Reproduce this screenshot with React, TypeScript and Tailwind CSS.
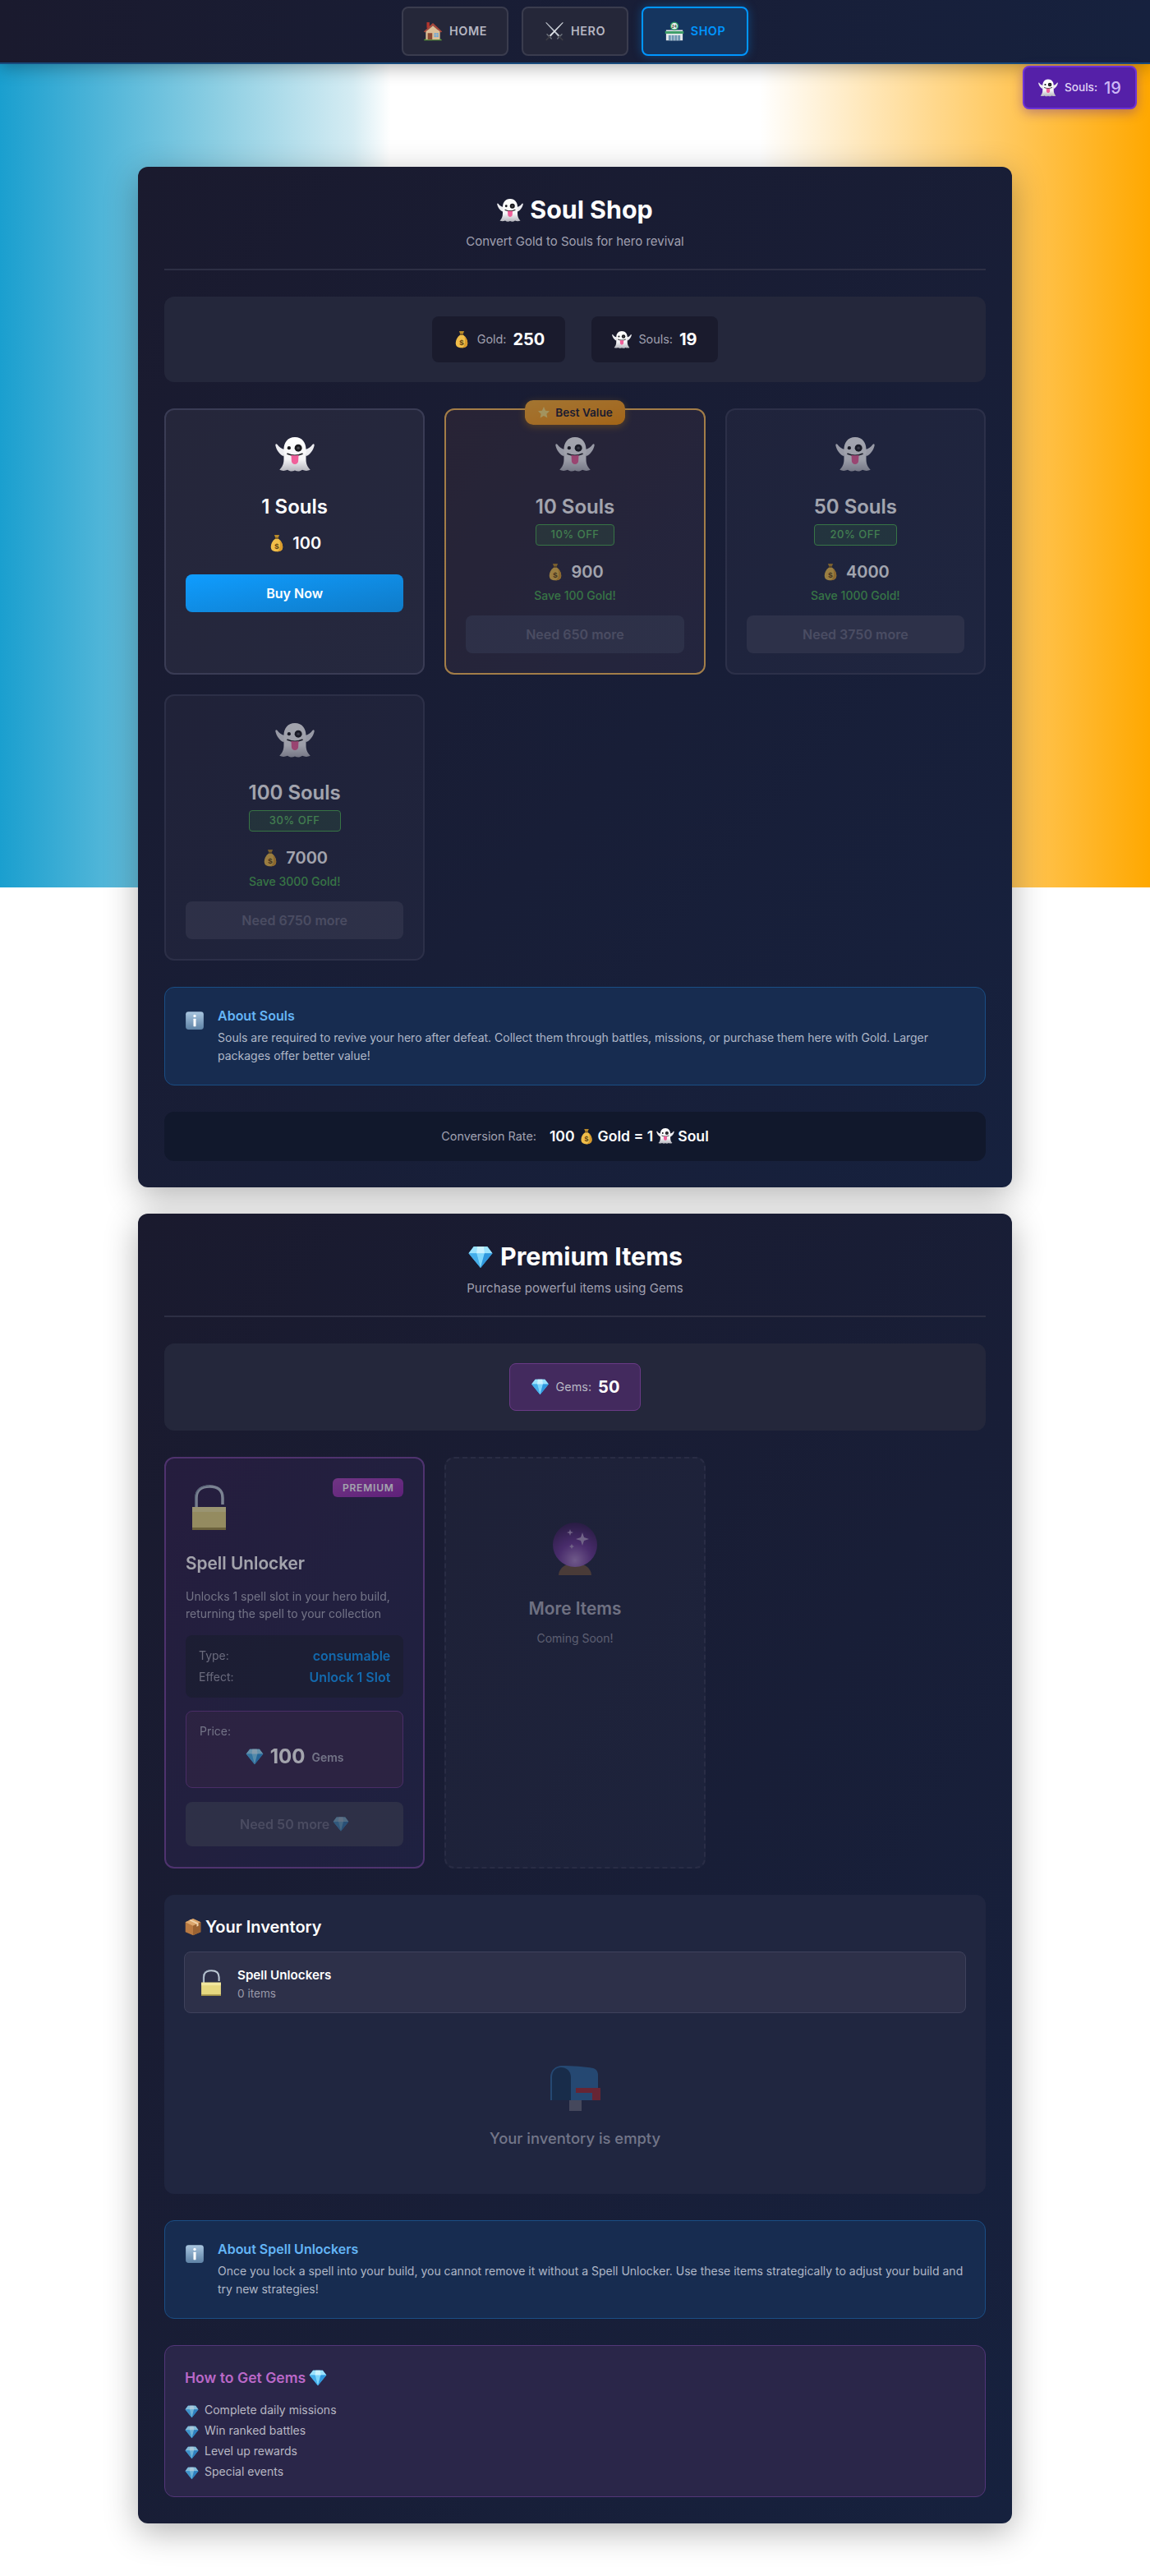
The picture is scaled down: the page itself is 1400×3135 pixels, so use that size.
import React from "react";

type IconProps = { className?: string };

function Ghost({ className }: IconProps) {
  return (
    <svg viewBox="0 0 64 56" className={className}>
      <defs>
        <linearGradient id="ghostFill" x1="0" y1="0" x2="0" y2="1">
          <stop offset="0" stopColor="#ffffff" />
          <stop offset="0.65" stopColor="#f4f4f6" />
          <stop offset="1" stopColor="#b4b4bc" />
        </linearGradient>
      </defs>
      <path d="M14 31C8 29 2 21 .5 13.500 0 11 2 10 3.500 12 6 16 10 19 16 20z" fill="#ececf0" />
      <path d="M50 31c6-2 12-10 13.500-17.500C64 11 62 10 60.500 12 58 16 54 19 48 20z" fill="#ececf0" />
      <path d="M32 0C20 0 14 9 14 20v16c0 8-3 13-7 17 4 2 9 2 13 0 4 3 8 3 12 1 4 2 8 2 12-1 4 2 9 2 13 0-4-4-7-9-7-17V20C50 9 44 0 32 0z" fill="url(#ghostFill)" />
      <circle cx="22.500" cy="17.500" r="2.800" fill="#18181c" />
      <circle cx="37.500" cy="17.500" r="6" fill="#18181c" />
      <circle cx="37.500" cy="17.500" r="2.300" fill="#4c4c54" />
      <path d="M20 27c8 3.500 16 3.500 24 0" fill="none" stroke="#18181c" strokeWidth="2.200" strokeLinecap="round" />
      <path d="M26 29c4 1 8 1 12 0l-.5 10c-.5 6.500-10.500 6.500-11 0z" fill="#f0609a" />
    </svg>
  );
}

function MoneyBag({ className }: IconProps) {
  return (
    <svg viewBox="0 0 64 64" className={className}>
      <path d="M23 3h18l-4 10H27z" fill="#b98a2a" />
      <path d="M26 13h12v4H26z" fill="#7d5a17" />
      <path d="M26 17C16 24 11 35 11 45c0 12 8 17 21 17s21-5 21-17c0-10-5-21-15-28z" fill="#f0be4a" />
      <path d="M41 20c7 6 12 15 12 25 0 12-8 17-21 17 12-6 15-24 9-42z" fill="#d99a2b" />
      <text x="32" y="52" textAnchor="middle" fontSize="28" fontWeight="700" fontFamily="Liberation Sans, sans-serif" fill="#5f4210">$</text>
    </svg>
  );
}

function Gem({ className }: IconProps) {
  return (
    <svg viewBox="0 5 64 58" className={className}>
      <path d="M15 7h34l13 17-30 37L2 24z" fill="#5cc4f5" />
      <path d="M15 7h34l13 17H2z" fill="#9be2fd" />
      <path d="M22 24h20L32 61z" fill="#7fd6fb" />
      <path d="M2 24h20l10 37z" fill="#45aeea" />
      <path d="M42 24h20L32 61z" fill="#2f97dd" />
      <path d="M24 7h16l2 17H22z" fill="#c9f1ff" />
    </svg>
  );
}

function OpenLock({ className }: IconProps) {
  return (
    <svg viewBox="0 0 41 55" className={className}>
      <path d="M5 28V16C5 6 12 2 21 2s16 4 16 14v8" fill="none" stroke="#bcc8d4" strokeWidth="3.500" />
      <path d="M3.800 28V16C3.800 6 11 1 21 1" fill="none" stroke="#7f93a6" strokeWidth="1.200" />
      <rect x="0" y="27" width="41" height="28" fill="#e6d880" />
      <rect x="0" y="27" width="41" height="6" fill="#f1e79f" />
      <rect x="0" y="52" width="41" height="3" fill="#a39347" />
    </svg>
  );
}

function House({ className }: IconProps) {
  return (
    <svg viewBox="0 0 64 64" className={className}>
      <rect x="12" y="3" width="9" height="18" fill="#b5352d" />
      <rect x="9" y="28" width="46" height="32" fill="#dcbf97" />
      <path d="M32 5L2 33l4 3 26-22 26 22 4-3z" fill="#a8473c" />
      <path d="M32 14L9 34h46z" fill="#dcbf97" />
      <rect x="15" y="38" width="15" height="22" fill="#8a4a33" />
      <rect x="36" y="38" width="14" height="13" fill="#6ba7d8" />
      <path d="M43 38v13M36 44h14" stroke="#dcbf97" strokeWidth="1.500" />
      <path d="M3 62c1-5 5-6 9-3h40c4-3 8-2 9 3z" fill="#5c9a3c" />
    </svg>
  );
}

function Swords({ className }: IconProps) {
  return (
    <svg viewBox="0 0 64 64" className={className}>
      <path d="M3 4l3-1 43 43-4 4z" fill="#c4cad2" />
      <path d="M61 4l-3-1-43 43 4 4z" fill="#e0e4e9" />
      <path d="M8 42l14 14M56 42L42 56" stroke="#6f747d" strokeWidth="4" strokeLinecap="round" />
      <path d="M17 49L6 60M47 49l11 11" stroke="#3c3c44" strokeWidth="4.500" strokeLinecap="round" />
    </svg>
  );
}

function Store({ className }: IconProps) {
  return (
    <svg viewBox="0 0 64 64" className={className}>
      <rect x="5" y="28" width="54" height="34" fill="#e4e8ea" />
      <rect x="2" y="32" width="60" height="8" fill="#3f9e6b" />
      <rect x="13" y="45" width="38" height="17" fill="#6f97b3" />
      <path d="M22 45v17M32 45v17M42 45v17" stroke="#e8eef2" strokeWidth="2" />
      <circle cx="32" cy="15" r="14" fill="#2f9a63" />
      <circle cx="32" cy="15" r="10" fill="#f4f6f4" />
      <text x="32" y="20" textAnchor="middle" fontSize="13" fontWeight="700" fontFamily="Liberation Sans, sans-serif" fill="#1e3a2c">24</text>
    </svg>
  );
}

function InfoTile({ className }: IconProps) {
  return (
    <svg viewBox="0 0 64 64" className={className}>
      <defs>
        <linearGradient id="infoFill" x1="0" y1="0" x2="0" y2="1">
          <stop offset="0" stopColor="#a9c6e0" />
          <stop offset="1" stopColor="#5f83a6" />
        </linearGradient>
      </defs>
      <rect x="3" y="3" width="58" height="58" rx="9" fill="url(#infoFill)" />
      <circle cx="32" cy="17" r="4.500" fill="#ffffff" />
      <rect x="28" y="26" width="8" height="25" rx="1" fill="#ffffff" />
    </svg>
  );
}

function Package({ className }: IconProps) {
  return (
    <svg viewBox="0 0 64 64" className={className}>
      <path d="M32 3l27 12v35L32 62 5 50V15z" fill="#b97a42" />
      <path d="M32 3l27 12-27 13L5 15z" fill="#dba66c" />
      <path d="M32 28l27-13v35L32 62z" fill="#9a6232" />
      <path d="M18 9l27 13v9l6-3v-9L24 6z" fill="#efd3ab" />
    </svg>
  );
}

function Mailbox({ className }: IconProps) {
  return (
    <svg viewBox="0 0 61 55" className={className}>
      <rect x="23" y="42" width="15" height="13" fill="#6b6b78" />
      <path d="M0 42V14C0 5 7 0 14 0c12 0 28 1 38 3 4 1 6 4 6 9v30z" fill="#2b6aa5" />
      <path d="M2 42V14C2 6 7 2 13 2s12 4 12 12v28z" fill="#113354" />
      <path d="M31 27h30v15H51v-9H31z" fill="#ad252a" />
    </svg>
  );
}

function CrystalBall({ className }: IconProps) {
  return (
    <svg viewBox="0 0 54 64" className={className}>
      <defs>
        <radialGradient id="ballFill" cx="0.5" cy="0.85" r="0.85">
          <stop offset="0" stopColor="#c596de" />
          <stop offset="0.45" stopColor="#7a3ca4" />
          <stop offset="1" stopColor="#3a1c54" />
        </radialGradient>
      </defs>
      <path d="M7 64c0-5 4-10 8-12h24c4 2 8 7 8 12z" fill="#7b5a3c" />
      <circle cx="27" cy="27" r="27" fill="url(#ballFill)" />
      <path d="M36 12l2 6 6 2-6 2-2 6-2-6-6-2 6-2z" fill="#c7a9d8" />
      <path d="M21 8l1 3 3 1-3 1-1 3-1-3-3-1 3-1zM23 26l1 2 2 1-2 1-1 2-1-2-2-1 2-1z" fill="#c7a9d8" />
    </svg>
  );
}

function Star({ className }: IconProps) {
  return (
    <svg viewBox="0 0 64 64" className={className}>
      <path d="M32 4l8.500 18.500L60 25 45.500 38.500 49.500 58 32 48 14.500 58l4-19.500L4 25l19.500-2.500z" fill="#ffe27a" />
    </svg>
  );
}

function NavButton({ icon, label, active }: { icon: React.ReactNode; label: string; active?: boolean }) {
  return (
    <button
      className={
        active
          ? "flex h-[60px] w-[130px] items-center justify-center gap-2 rounded-lg border-2 border-[#0096ff] bg-[#15355f] text-[14.4px] font-semibold tracking-[0.5px] text-[#0096ff] shadow-[0_0_12px_rgba(0,150,255,0.35)]"
          : "flex h-[60px] w-[130px] items-center justify-center gap-2 rounded-lg border-2 border-[#3a3c4e] bg-[#252739] text-[14.4px] font-semibold tracking-[0.5px] text-[#b6b6c2]"
      }
    >
      {icon}
      <span>{label}</span>
    </button>
  );
}

function SectionHeader({ icon, title, subtitle }: { icon: React.ReactNode; title: string; subtitle: string }) {
  return (
    <div className="mb-8 border-b-2 border-[#2d2f44] pb-[22px] text-center">
      <h2 className="flex h-[42px] items-center justify-center gap-2 text-[30.4px] font-bold text-white">
        {icon}
        {title}
      </h2>
      <p className="mt-1.5 text-[15px] leading-[22px] text-[#a0a0b0]">{subtitle}</p>
    </div>
  );
}

function PackCard({
  amount,
  price,
  discount,
  save,
  need,
  best,
}: {
  amount: number;
  price: number;
  discount?: string;
  save?: string;
  need?: string;
  best?: boolean;
}) {
  const disabled = !!need;
  return (
    <div
      className={`relative flex h-[324px] flex-col items-center rounded-xl border-2 px-6 pt-[33px] ${
        best
          ? "border-[#ffbe55] bg-gradient-to-br from-[#322937] to-[#2b2b44]"
          : "border-[#3a3c55] bg-white/5"
      } ${disabled ? "opacity-60" : ""}`}
    >
      {best && (
        <div className="absolute top-[-12px] left-1/2 flex h-[30px] w-[122px] -translate-x-1/2 items-center justify-center gap-1.5 rounded-[10px] bg-gradient-to-br from-[#ffb030] to-[#ff9500] text-[13.6px] font-semibold text-[#1a1a2e] shadow-[0_2px_10px_rgba(255,165,0,0.4)]">
          <Star className="h-4 w-4" />
          Best Value
        </div>
      )}
      <Ghost className="h-[42px] w-12" />
      <div className="mt-[27px] flex flex-col items-stretch">
        <div className="text-center text-[24px] leading-[32px] font-semibold text-white">{amount} Souls</div>
        {discount && (
          <div className="mt-[5px] flex h-[26px] items-center justify-center rounded border border-[#4caf50] bg-[#4caf50]/20 text-[13px] font-medium tracking-[0.5px] text-[#5fbf63]">
            {discount}
          </div>
        )}
      </div>
      <div className={`flex h-[28px] items-center gap-2 text-[20px] font-semibold text-white ${disabled ? "mt-[18px]" : "mt-[14px]"}`}>
        <MoneyBag className="h-[22px] w-[22px]" />
        {price}
      </div>
      {save && <div className="mt-[6px] text-[14px] leading-[18px] font-medium text-[#4caf50]">{save}</div>}
      <button
        className={
          disabled
            ? "mt-[15px] h-[46px] w-full rounded-lg bg-[#3c3e55] text-[16px] font-semibold text-[#6c6c80]"
            : "mt-[24px] h-[46px] w-full rounded-lg bg-gradient-to-br from-[#0f9dff] to-[#0f7bc8] text-[16px] font-semibold text-white"
        }
      >
        {need ?? "Buy Now"}
      </button>
    </div>
  );
}

function InfoBox({ title, text }: { title: string; text: string }) {
  return (
    <div className="flex gap-4 rounded-xl border border-[#1a4e85] bg-[#172c50] px-6 py-6">
      <InfoTile className="mt-1 h-6 w-6 shrink-0" />
      <div>
        <h4 className="text-[16px] leading-[20px] font-semibold text-[#64b5f6]">{title}</h4>
        <p className="mt-1.5 text-[14px] leading-[22px] text-[#b0b8c8]">{text}</p>
      </div>
    </div>
  );
}

export default function App() {
  return (
    <div className="relative bg-white bg-[linear-gradient(90deg,#1a9fcf_0px,#8ecfe3_268px,#d5ecf3_430px,#ffffff_475px,#ffffff_925px,#ffa800_1400px)] bg-[length:100%_1080px] bg-no-repeat pb-16 font-['Inter',sans-serif]">
      <nav className="flex h-[78px] justify-center gap-4 border-b-2 border-[#174a7c] bg-gradient-to-r from-[#1a1a2e] to-[#16213e] pt-2 shadow-[0_4px_20px_rgba(0,0,0,0.3)]">
        <NavButton icon={<House className="h-6 w-6" />} label="HOME" />
        <NavButton icon={<Swords className="h-6 w-6" />} label="HERO" />
        <NavButton icon={<Store className="h-6 w-6" />} label="SHOP" active />
      </nav>

      <div className="absolute top-[80px] right-4 flex h-[53px] w-[139px] items-center justify-center gap-2 rounded-lg border-2 border-[#6d33d6] bg-[#5520a8] shadow-[0_4px_14px_rgba(85,32,168,0.4)]">
        <Ghost className="h-[22px] w-[24px]" />
        <span className="text-[13.6px] font-medium text-[#e0d5f5]">Souls:</span>
        <span className="text-[20px] font-medium text-[#cdb8f7]">19</span>
      </div>

      <main className="mx-auto flex w-[1064px] flex-col gap-8 pt-[125px]">
        <section className="rounded-xl bg-gradient-to-br from-[#1a1a2e] to-[#16213e] p-8 shadow-[0_10px_40px_rgba(0,0,0,0.3)]">
          <SectionHeader
            icon={<Ghost className="h-[28px] w-[32px]" />}
            title="Soul Shop"
            subtitle="Convert Gold to Souls for hero revival"
          />

          <div className="mb-8 flex justify-center gap-8 rounded-xl bg-[#24273b] p-6">
            <div className="flex h-14 w-[162px] items-center justify-center gap-2 rounded-lg bg-[#1a1b2d]">
              <MoneyBag className="h-[22px] w-[22px]" />
              <span className="text-[14.4px] text-[#a0a0b0]">Gold:</span>
              <span className="text-[20px] font-bold text-white">250</span>
            </div>
            <div className="flex h-14 w-[154px] items-center justify-center gap-2 rounded-lg bg-[#1a1b2d]">
              <Ghost className="h-[21px] w-[24px]" />
              <span className="text-[14.4px] text-[#a0a0b0]">Souls:</span>
              <span className="text-[20px] font-bold text-white">19</span>
            </div>
          </div>

          <div className="mb-8 grid grid-cols-3 gap-6">
            <PackCard amount={1} price={100} />
            <PackCard amount={10} price={900} discount="10% OFF" save="Save 100 Gold!" need="Need 650 more" best />
            <PackCard amount={50} price={4000} discount="20% OFF" save="Save 1000 Gold!" need="Need 3750 more" />
            <PackCard amount={100} price={7000} discount="30% OFF" save="Save 3000 Gold!" need="Need 6750 more" />
          </div>

          <InfoBox
            title="About Souls"
            text="Souls are required to revive your hero after defeat. Collect them through battles, missions, or purchase them here with Gold. Larger packages offer better value!"
          />

          <div className="mt-8 flex h-[60px] items-center justify-center gap-4 rounded-xl bg-[#11182c]">
            <span className="text-[14.4px] text-[#a0a0b0]">Conversion Rate:</span>
            <span className="flex items-center gap-1 text-[17.6px] font-semibold text-white">
              100 <MoneyBag className="h-5 w-5" /> Gold = 1 <Ghost className="h-[19px] w-[22px]" /> Soul
            </span>
          </div>
        </section>

        <section className="rounded-xl bg-gradient-to-br from-[#1a1a2e] to-[#16213e] p-8 shadow-[0_10px_40px_rgba(0,0,0,0.3)]">
          <SectionHeader
            icon={<Gem className="h-[28px] w-[32px]" />}
            title="Premium Items"
            subtitle="Purchase powerful items using Gems"
          />

          <div className="mb-8 flex justify-center rounded-xl bg-[#24273b] p-6">
            <div className="flex h-[58px] w-[160px] items-center justify-center gap-2 rounded-lg border border-[#6a3a86] bg-[#432a5e]">
              <Gem className="h-[20px] w-[23px]" />
              <span className="text-[14.4px] text-[#b8b8c4]">Gems:</span>
              <span className="text-[20px] font-bold text-white">50</span>
            </div>
          </div>

          <div className="mb-8 grid grid-cols-3 gap-6">
            <div className="relative h-[501px] rounded-xl border-2 border-[#734498] bg-gradient-to-br from-[#2e2148] to-[#22254a] p-6 opacity-60">
              <div className="absolute top-[24px] right-[24px] flex h-[23px] w-[86px] items-center justify-center rounded-md bg-gradient-to-br from-[#ab47bc] to-[#8e24aa] text-[12px] font-semibold tracking-[0.8px] text-white">
                PREMIUM
              </div>
              <OpenLock className="mt-2 ml-2 h-[55px] w-[41px]" />
              <h3 className="mt-[26px] text-[20.8px] leading-[30px] font-semibold text-white">Spell Unlocker</h3>
              <p className="mt-[14px] text-[14px] leading-[21px] text-[#b0b0c0]">
                Unlocks 1 spell slot in your hero build, returning the spell to your collection
              </p>
              <div className="mt-[16px] flex h-[76px] flex-col justify-center gap-[6px] rounded-lg bg-[#1f2036] px-4">
                <div className="flex items-center justify-between text-[14px] leading-[20px]">
                  <span className="text-[#a0a0b0]">Type:</span>
                  <span className="text-[16px] font-semibold text-[#0f9dff]">consumable</span>
                </div>
                <div className="flex items-center justify-between text-[14px] leading-[20px]">
                  <span className="text-[#a0a0b0]">Effect:</span>
                  <span className="text-[16px] font-semibold text-[#0f9dff]">Unlock 1 Slot</span>
                </div>
              </div>
              <div className="mt-[16px] h-[94px] rounded-lg border border-[#6b3a8a] bg-[#3a284e] px-4 pt-[14px]">
                <div className="text-[14px] leading-[20px] text-[#b0b0c0]">Price:</div>
                <div className="mt-[6px] flex items-center justify-center gap-2">
                  <Gem className="h-[20px] w-[22px]" />
                  <span className="text-[24px] leading-[30px] font-bold text-white">100</span>
                  <span className="text-[14px] font-semibold text-[#b0b0c0]">Gems</span>
                </div>
              </div>
              <button className="mt-[17px] flex h-[54px] w-full items-center justify-center gap-1 rounded-lg bg-[#3c3e55] text-[16px] font-semibold text-[#6c6c80]">
                Need 50 more <Gem className="h-[18px] w-[20px] opacity-60" />
              </button>
            </div>

            <div className="flex h-[501px] flex-col items-center rounded-xl border-2 border-dashed border-[#3a3c55] bg-white/5 pt-[78px] opacity-50">
              <CrystalBall className="h-[64px] w-[54px]" />
              <h3 className="mt-[26px] text-[20.8px] leading-[30px] font-semibold text-[#c4c4d0]">More Items</h3>
              <p className="mt-[11px] text-[14px] leading-[20px] text-[#a0a0b0]">Coming Soon!</p>
            </div>
          </div>

          <div className="mb-8 h-[364px] rounded-xl bg-[#202640] p-6">
            <h3 className="flex h-[30px] items-center gap-1 text-[20px] font-semibold text-white">
              <Package className="h-[22px] w-[22px]" />
              Your Inventory
            </h3>
            <div className="mt-[15px] flex h-[75px] items-center gap-5 rounded-lg border border-[#3f425c] bg-[#2d3049] px-5">
              <OpenLock className="h-[32px] w-[24px]" />
              <div className="mt-1">
                <div className="text-[15.2px] leading-[20px] font-semibold text-white">Spell Unlockers</div>
                <div className="mt-[2px] text-[13.6px] leading-[20px] text-[#9a9aaa]">0 items</div>
              </div>
            </div>
            <div className="mt-[64px] flex flex-col items-center opacity-50">
              <Mailbox className="h-[55px] w-[61px]" />
              <p className="mt-[20px] text-[18.4px] leading-[26px] font-medium text-[#c4c4d0]">Your inventory is empty</p>
            </div>
          </div>

          <InfoBox
            title="About Spell Unlockers"
            text="Once you lock a spell into your build, you cannot remove it without a Spell Unlocker. Use these items strategically to adjust your build and try new strategies!"
          />

          <div className="mt-8 h-[185px] rounded-xl border border-[#533679] bg-[#2a2649] px-6 pt-[27px]">
            <h4 className="flex h-[24px] items-center gap-1 text-[17.6px] font-semibold text-[#ba68c8]">
              How to Get Gems <Gem className="h-[20px] w-[22px]" />
            </h4>
            <ul className="mt-[14px]">
              {["Complete daily missions", "Win ranked battles", "Level up rewards", "Special events"].map((item) => (
                <li key={item} className="flex h-[25px] items-center gap-[7px] text-[14px] text-[#b8b8c4]">
                  <Gem className="mt-1 h-[16px] w-[17px] opacity-80" />
                  {item}
                </li>
              ))}
            </ul>
          </div>
        </section>
      </main>
    </div>
  );
}
